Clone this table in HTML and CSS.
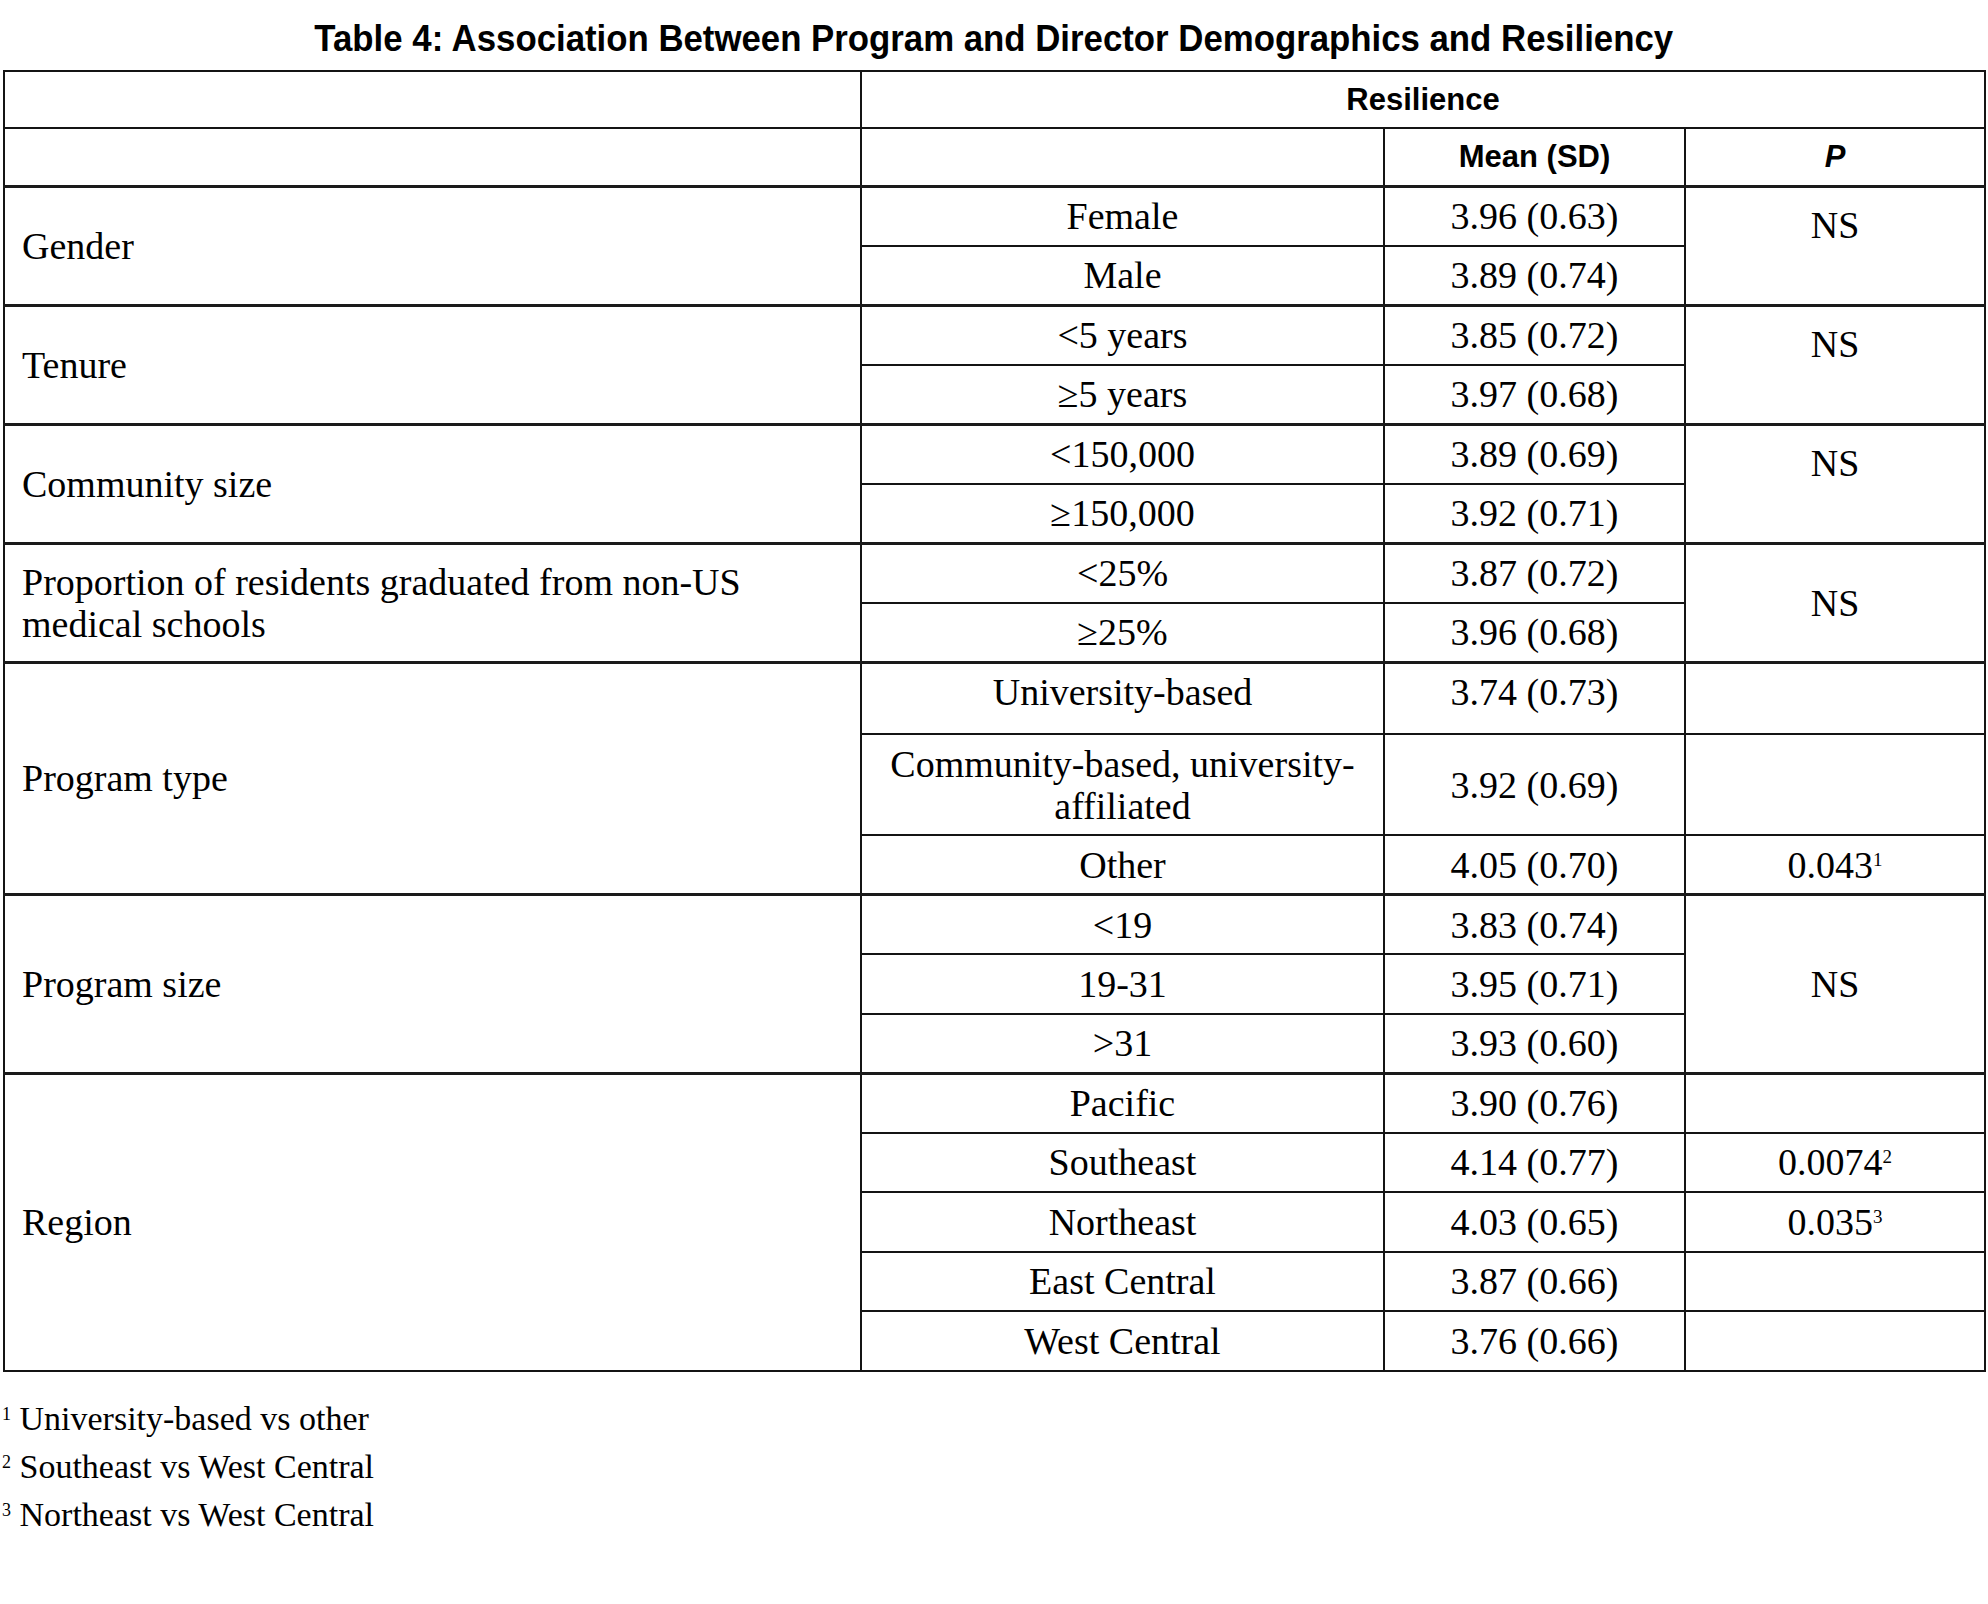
FILE: index.html
```html
<!DOCTYPE html>
<html lang="en">
<head>
<meta charset="utf-8">
<title>Table 4: Association Between Program and Director Demographics and Resiliency</title>
<link rel="stylesheet" href="styles.css">
</head>
<body>
<div class="page">
  <h1 class="title"><span class="title-text">Table 4: Association Between Program and Director Demographics and Resiliency</span></h1>
  <table class="data">
    <colgroup>
      <col class="col-var">
      <col class="col-cat">
      <col class="col-mean">
      <col class="col-p">
    </colgroup>
    <thead>
      <tr class="head-row">
        <th></th>
        <th colspan="3">Resilience</th>
      </tr>
      <tr class="head-row head-row-2">
        <th></th>
        <th></th>
        <th>Mean (SD)</th>
        <th><i>P</i></th>
      </tr>
    </thead>
    <tbody>
      <tr class="group">
        <td rowspan="2" class="var">Gender</td>
        <td>Female</td>
        <td>3.96 (0.63)</td>
        <td rowspan="2" class="top">NS</td>
      </tr>
      <tr>
        <td>Male</td>
        <td>3.89 (0.74)</td>
      </tr>

      <tr class="group">
        <td rowspan="2" class="var">Tenure</td>
        <td>&lt;5 years</td>
        <td>3.85 (0.72)</td>
        <td rowspan="2" class="top">NS</td>
      </tr>
      <tr>
        <td>≥5 years</td>
        <td>3.97 (0.68)</td>
      </tr>

      <tr class="group">
        <td rowspan="2" class="var">Community size</td>
        <td>&lt;150,000</td>
        <td>3.89 (0.69)</td>
        <td rowspan="2" class="top">NS</td>
      </tr>
      <tr>
        <td>≥150,000</td>
        <td>3.92 (0.71)</td>
      </tr>

      <tr class="group">
        <td rowspan="2" class="var">Proportion of residents graduated from non-US medical schools</td>
        <td>&lt;25%</td>
        <td>3.87 (0.72)</td>
        <td rowspan="2">NS</td>
      </tr>
      <tr>
        <td>≥25%</td>
        <td>3.96 (0.68)</td>
      </tr>

      <tr class="group row-univ">
        <td rowspan="3" class="var">Program type</td>
        <td class="raise">University-based</td>
        <td class="raise">3.74 (0.73)</td>
        <td></td>
      </tr>
      <tr class="row-comm">
        <td>Community-based, university-<br>affiliated</td>
        <td>3.92 (0.69)</td>
        <td></td>
      </tr>
      <tr>
        <td>Other</td>
        <td>4.05 (0.70)</td>
        <td>0.043<sup>1</sup></td>
      </tr>

      <tr class="group">
        <td rowspan="3" class="var">Program size</td>
        <td>&lt;19</td>
        <td>3.83 (0.74)</td>
        <td rowspan="3">NS</td>
      </tr>
      <tr>
        <td>19-31</td>
        <td>3.95 (0.71)</td>
      </tr>
      <tr>
        <td>&gt;31</td>
        <td>3.93 (0.60)</td>
      </tr>

      <tr class="group">
        <td rowspan="5" class="var">Region</td>
        <td>Pacific</td>
        <td>3.90 (0.76)</td>
        <td></td>
      </tr>
      <tr>
        <td>Southeast</td>
        <td>4.14 (0.77)</td>
        <td>0.0074<sup>2</sup></td>
      </tr>
      <tr>
        <td>Northeast</td>
        <td>4.03 (0.65)</td>
        <td>0.035<sup>3</sup></td>
      </tr>
      <tr>
        <td>East Central</td>
        <td>3.87 (0.66)</td>
        <td></td>
      </tr>
      <tr>
        <td>West Central</td>
        <td>3.76 (0.66)</td>
        <td></td>
      </tr>
    </tbody>
  </table>
  <div class="notes">
    <p class="note"><sup>1</sup> University-based vs other</p>
    <p class="note"><sup>2</sup> Southeast vs West Central</p>
    <p class="note"><sup>3</sup> Northeast vs West Central</p>
  </div>
</div>
</body>
</html>
```

FILE: styles.css
```css
html, body {
  margin: 0;
  padding: 0;
  background: #ffffff;
}

body {
  color: #000000;
  font-family: "Liberation Serif", "Times New Roman", serif;
}

.page {
  width: 1988px;
}

.title {
  margin: 0 0 13px 0;
  padding-top: 20px;
  height: 37px;
  line-height: 37px;
  text-align: center;
  font-family: "Liberation Sans", Arial, sans-serif;
  font-weight: bold;
  font-size: 37px;
  white-space: nowrap;
}

.title-text {
  display: inline-block;
  transform: scaleX(0.94);
  transform-origin: center;
}

.data {
  border-collapse: collapse;
  table-layout: fixed;
  width: 1981px;
  margin-left: 3px;
  border: 2px solid #141414;
}

.col-var { width: 857px; }
.col-cat { width: 523px; }
.col-mean { width: 301px; }
.col-p { width: 300px; }

.data th,
.data td {
  border: 2px solid #141414;
  padding: 0 17px;
  text-align: center;
  vertical-align: middle;
  font-size: 38px;
  line-height: 42px;
  font-weight: normal;
}

.data th {
  font-family: "Liberation Sans", Arial, sans-serif;
  font-weight: bold;
  font-size: 31px;
  line-height: 36px;
}

.data th i {
  font-style: italic;
}

.head-row { height: 57px; }
.head-row-2 { height: 58px; }

.data tbody tr { height: 59.5px; }

.data tr.group td {
  border-top: 3px solid #1a1a1a;
}

.head-row-2 th {
  border-bottom: 3px solid #1a1a1a;
}

.data td.var {
  text-align: left;
}

.data td.top {
  vertical-align: top;
  padding-top: 16px;
}

.data tbody tr.row-univ { height: 72px; }
.data tbody tr.row-comm { height: 101px; }

.data td.raise {
  padding-bottom: 12px;
}

.data sup {
  font-size: 19px;
  line-height: 0;
  vertical-align: 12px;
}

.notes {
  margin-top: 23px;
  padding-left: 2px;
}

.note {
  margin: 0;
  font-size: 34px;
  line-height: 48px;
}

.note sup {
  font-size: 18px;
  line-height: 0;
  vertical-align: 10px;
}
```
